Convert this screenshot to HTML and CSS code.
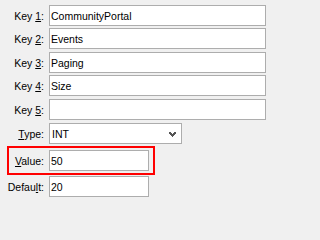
FILE: index.html
```html
<!DOCTYPE html>
<html>
<head>
<meta charset="utf-8">
<link rel="stylesheet" href="styles.css">
</head>
<body>
<div class="form">
  <div class="row">
    <label class="label">Key <u>1</u>:</label>
    <input class="field wide" type="text" value="CommunityPortal">
  </div>
  <div class="row g2">
    <label class="label">Key <u>2</u>:</label>
    <input class="field wide" type="text" value="Events">
  </div>
  <div class="row g3">
    <label class="label">Key <u>3</u>:</label>
    <input class="field wide" type="text" value="Paging">
  </div>
  <div class="row g2">
    <label class="label">Key <u>4</u>:</label>
    <input class="field wide" type="text" value="Size">
  </div>
  <div class="row g3">
    <label class="label">Key <u>5</u>:</label>
    <input class="field wide" type="text" value="">
  </div>
  <div class="row g3">
    <label class="label"><u>T</u>ype:</label>
    <div class="field select">
      <span>INT</span>
      <svg class="chev" width="7" height="5" viewBox="0 0 7 5"><path d="M0 0h2v1h1v1h1v-1h1v-1h2v2h-1v1h-1v1h-1v1h-1v-1h-1v-1h-1v-1h-1z" fill="#555"/></svg>
    </div>
  </div>
  <div class="row highlight">
    <label class="label short"><u>V</u>alue:</label>
    <input class="field narrow" type="text" value="50">
  </div>
  <div class="row g3">
    <label class="label">Defau<u>l</u>t:</label>
    <input class="field narrow" type="text" value="20">
  </div>
</div>
</body>
</html>
```
FILE: styles.css
```css
html, body {
  margin: 0;
  padding: 0;
  background: #f0f0f0;
}
body {
  font-family: "Liberation Sans", Arial, sans-serif;
  font-size: 10.5px;
  color: #000;
}
.form {
  display: flex;
  flex-direction: column;
  padding-top: 5px;
}
.row {
  display: flex;
  align-items: center;
  height: 21px;
}
.g2 { margin-top: 2px; }
.g3 { margin-top: 3px; }
.label {
  width: 44px;
  margin-right: 5px;
  text-align: right;
  white-space: nowrap;
}
.label u {
  text-underline-offset: 1px;
}
.field {
  box-sizing: border-box;
  height: 21px;
  margin: 0;
  border: 1px solid #adadad;
  border-radius: 0;
  background: #fff;
  padding: 0 1px;
  font: inherit;
  color: #000;
  outline: none;
}
.wide { width: 217px; }
.narrow { width: 100px; }
.select {
  width: 133px;
  display: flex;
  align-items: center;
  justify-content: space-between;
  padding: 0 5px 0 2px;
}
.chev {
  display: block;
  margin-top: 1px;
}
.highlight {
  box-sizing: content-box;
  margin-top: 4px;
  margin-left: 9px;
  width: 144px;
  padding: 2px 0;
  outline: 2px solid #f00;
}
.label.short {
  width: 35px;
}
```
